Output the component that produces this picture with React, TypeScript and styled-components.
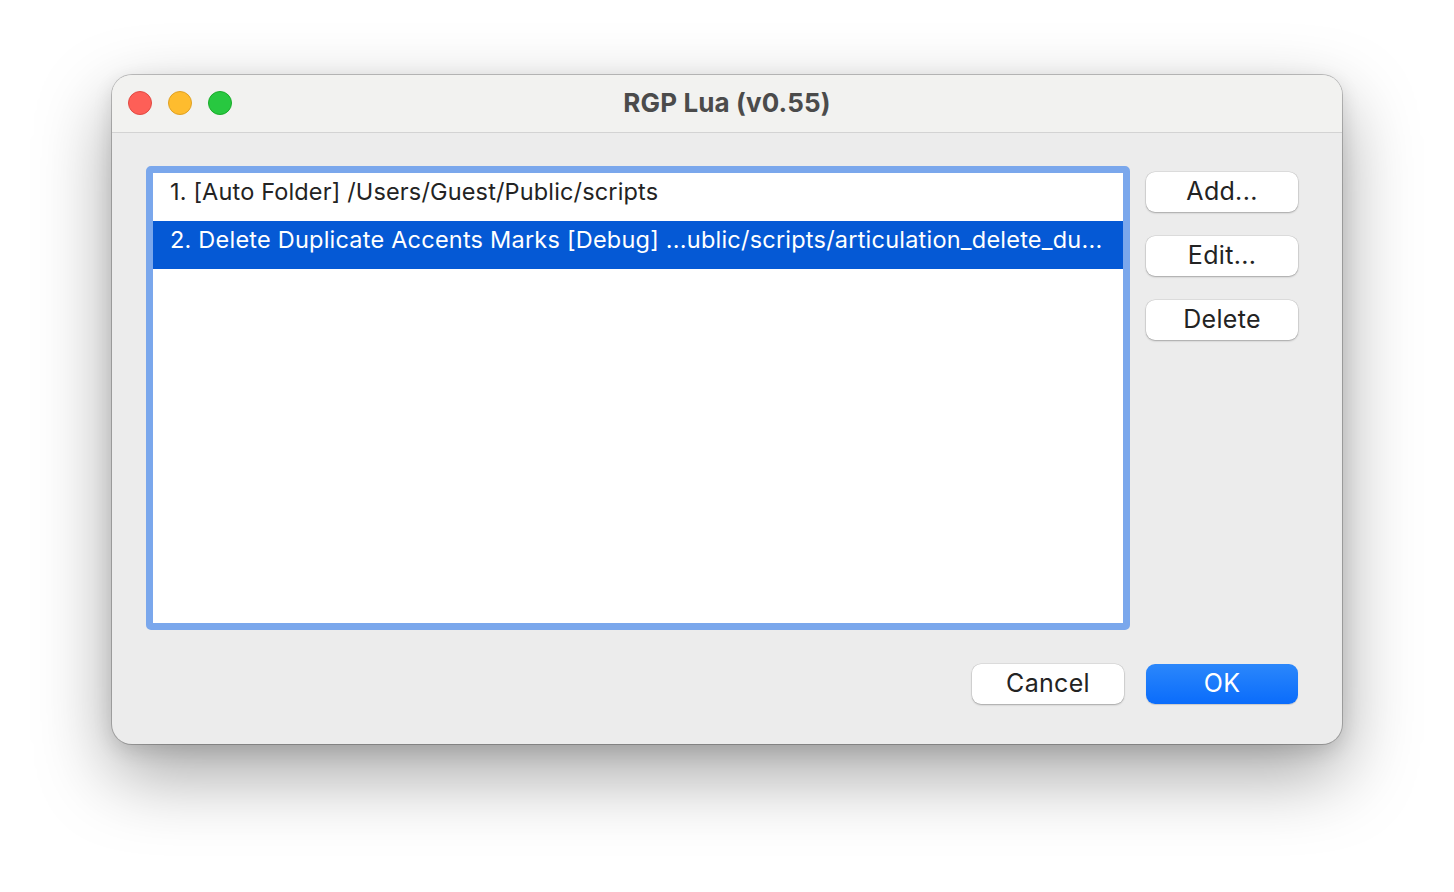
import React from "react";
import styled, { createGlobalStyle } from "styled-components";

const Global = createGlobalStyle`
  html, body { margin: 0; padding: 0; background: #ffffff; }
  body { font-family: Inter, "Noto Sans", sans-serif; -webkit-font-smoothing: antialiased; }
`;

const Page = styled.div`
  width: 1454px;
  height: 892px;
  padding: 75px 0 0 112px;
  box-sizing: border-box;
  background: #ffffff;
`;

const Window = styled.div`
  width: 1230px;
  height: 669px;
  box-sizing: border-box;
  border-radius: 20px;
  background: #ececec;
  box-shadow: 0 0 0 1px rgba(0, 0, 0, 0.22), 0 30px 75px rgba(0, 0, 0, 0.36),
    0 6px 20px rgba(0, 0, 0, 0.12);
  overflow: hidden;
  display: flex;
  flex-direction: column;
`;

const TitleBar = styled.div`
  height: 57px;
  flex: none;
  background: #f2f2f0;
  border-bottom: 1px solid #d3d3d3;
  position: relative;
  display: flex;
  align-items: center;
  justify-content: center;
`;

const Lights = styled.div`
  position: absolute;
  left: 16px;
  top: 16px;
  display: flex;
  gap: 16px;
`;

const Light = styled.span<{ $c: string; $b: string }>`
  width: 24px;
  height: 24px;
  border-radius: 50%;
  box-sizing: border-box;
  background: ${(p) => p.$c};
  border: 1px solid ${(p) => p.$b};
`;

const Title = styled.div`
  font-size: 26px;
  font-weight: 700;
  color: #4b4b4b;
  letter-spacing: 0.13px;
  margin-top: -2px;
`;

const Body = styled.div`
  flex: 1;
  display: flex;
  flex-direction: column;
  padding: 33px 44px 40px 34px;
`;

const Main = styled.div`
  display: flex;
  gap: 16px;
`;

const ListBox = styled.div`
  width: 984px;
  height: 464px;
  box-sizing: border-box;
  border: 7px solid #7aa7ec;
  border-radius: 5px;
  background: #ffffff;
  overflow: hidden;
`;

const Row = styled.div<{ $sel?: boolean }>`
  height: 48px;
  line-height: 38px;
  padding-left: 17px;
  font-size: 23.5px;
  letter-spacing: ${(p) => (p.$sel ? "0.22px" : "0.15px")};
  white-space: nowrap;
  overflow: hidden;
  color: ${(p) => (p.$sel ? "#ffffff" : "#232323")};
  background: ${(p) => (p.$sel ? "#0559d5" : "transparent")};
`;

const Side = styled.div`
  display: flex;
  flex-direction: column;
  gap: 24px;
  padding-top: 6px;
`;

const Button = styled.button<{ $primary?: boolean }>`
  width: 152px;
  height: 40px;
  border: none;
  border-radius: 9px;
  font-family: Inter, "Noto Sans", sans-serif;
  font-size: 25px;
  letter-spacing: 0.3px;
  padding: 0 0 2px 0;
  color: ${(p) => (p.$primary ? "#ffffff" : "#232323")};
  background: ${(p) =>
    p.$primary ? "linear-gradient(#2b87fb, #0a6cfb)" : "#ffffff"};
  box-shadow: ${(p) =>
    p.$primary
      ? "0 1px 1px rgba(0,0,0,0.15)"
      : "0 0 0 0.5px rgba(0,0,0,0.12), 0 1px 2px rgba(0,0,0,0.25)"};
`;

const Footer = styled.div`
  display: flex;
  justify-content: flex-end;
  gap: 22px;
  margin-top: 34px;
`;

export default function App() {
  return (
    <>
      <Global />
      <Page>
        <Window>
          <TitleBar>
            <Lights>
              <Light $c="#fe5f57" $b="#e14942" />
              <Light $c="#febc2e" $b="#dfa023" />
              <Light $c="#28c840" $b="#1aab29" />
            </Lights>
            <Title>RGP Lua (v0.55)</Title>
          </TitleBar>
          <Body>
            <Main>
              <ListBox>
                <Row>1. [Auto Folder] /Users/Guest/Public/scripts</Row>
                <Row $sel>
                  2. Delete Duplicate Accents Marks [Debug] ...ublic/scripts/articulation_delete_du...
                </Row>
              </ListBox>
              <Side>
                <Button>Add...</Button>
                <Button>Edit...</Button>
                <Button>Delete</Button>
              </Side>
            </Main>
            <Footer>
              <Button>Cancel</Button>
              <Button $primary>OK</Button>
            </Footer>
          </Body>
        </Window>
      </Page>
    </>
  );
}
